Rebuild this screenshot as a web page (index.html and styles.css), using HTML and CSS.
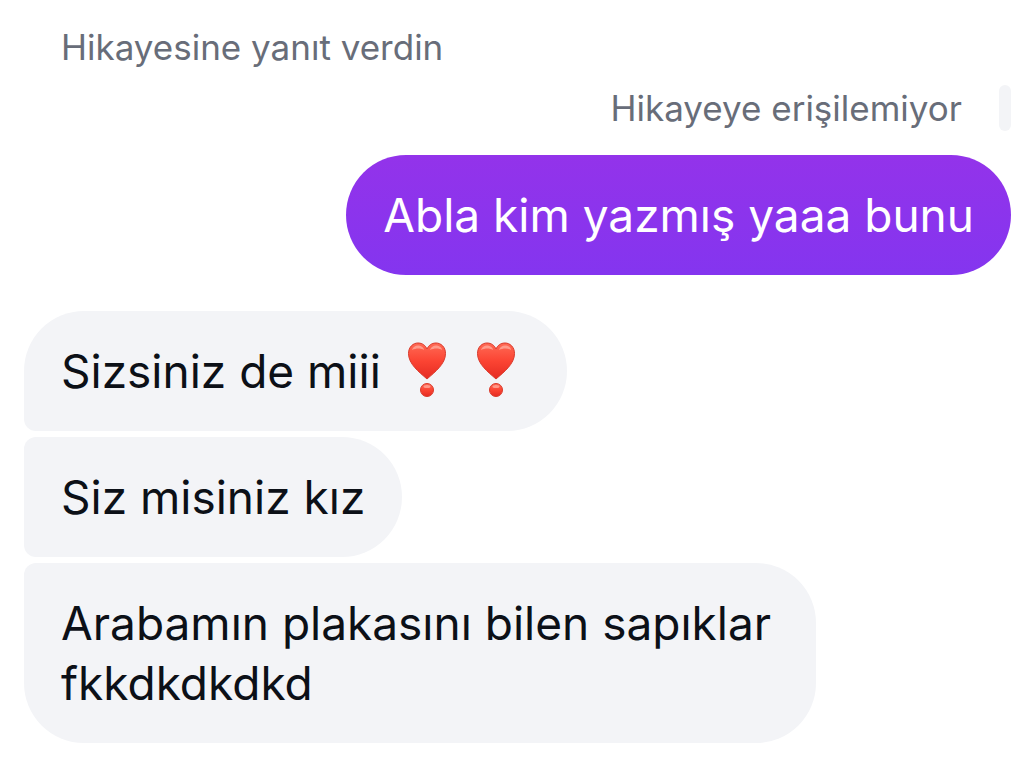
FILE: index.html
```html
<!DOCTYPE html>
<html lang="tr">
<head>
<meta charset="utf-8">
<meta name="viewport" content="width=device-width, initial-scale=1">
<title>Sohbet</title>
<link rel="stylesheet" href="styles.css">
</head>
<body>
<svg class="defs" width="0" height="0" aria-hidden="true">
  <defs>
    <linearGradient id="heartFill" x1="0" y1="0" x2="0" y2="1">
      <stop offset="0" stop-color="#ff6a55"/>
      <stop offset="0.5" stop-color="#fb4433"/>
      <stop offset="1" stop-color="#e52b22"/>
    </linearGradient>
    <symbol id="heart" viewBox="0 0 40 58">
      <path d="M20 38C12 31 1.500 23 1.500 12.500C1.500 6 6 2 11 2C15.500 2 18.500 4.500 20 8C21.500 4.500 24.500 2 29 2C34 2 38.500 6 38.500 12.500C38.500 23 28 31 20 38Z" fill="url(#heartFill)" stroke="#d93a2b" stroke-width="1"/>
      <path d="M5 9C6 5.500 9 4 12 4.500C15 5 17 7 17 9C14 7 9 7 5 9ZM23 9C24 5.500 27 4 30 4.500C33 5 35 7 35 9C32 7 27 7 23 9Z" fill="#ffb3a5" opacity=".7"/>
      <circle cx="20" cy="49" r="6.500" fill="url(#heartFill)" stroke="#d93a2b" stroke-width="1"/>
      <ellipse cx="20" cy="45.500" rx="3.500" ry="1.500" fill="#ffb3a5" opacity=".7"/>
    </symbol>
  </defs>
</svg>
<main class="chat">
  <p class="note">Hikayesine yanıt verdin</p>
  <div class="reply"><p>Hikayeye erişilemiyor</p><span class="bar"></span></div>
  <p class="bubble sent">Abla kim yazmış yaaa bunu</p>
  <section class="received">
    <p class="bubble first">Sizsiniz de miii
      <span class="hearts" role="img" aria-label="kalp ünlem"><svg><use href="#heart"/></svg><svg><use href="#heart"/></svg></span></p>
    <p class="bubble">Siz misiniz kız</p>
    <p class="bubble">Arabamın plakasını bilen sapıklar fkkdkdkdkd</p>
  </section>
</main>
</body>
</html>
```
FILE: styles.css
```css
* { box-sizing: border-box; }
body { margin: 0; background: #fff; font-family: Inter, "Noto Sans", sans-serif; }
p { margin: 0; }
.defs { position: absolute; }
.chat { display: flex; flex-direction: column; padding: 24px 23px 20px 24px; }
.note, .reply { color: #686d79; font-size: 35px; line-height: 46px; }
.note { padding-left: 37px; }
.reply { display: flex; justify-content: flex-end; gap: 37px; margin-top: 15px; }
.bar { width: 12px; height: 46px; border-radius: 6px; background: #f3f4f7; }
.bubble { width: fit-content; max-width: 792px; padding: 30px 37px; border-radius: 12px 60px 60px 12px; background: #f3f4f7; color: #0c1017; font-size: 46px; line-height: 60px; }
.sent { align-self: flex-end; margin-top: 24px; border-radius: 60px; background: linear-gradient(#9333ea, #8435ef); color: #fff; }
.received { display: flex; flex-direction: column; gap: 6px; margin-top: 36px; }
.first { display: flex; border-top-left-radius: 60px; }
.received .bubble:last-child { border-bottom-left-radius: 60px; }
.hearts { display: flex; gap: 29px; padding: 0 14px 0 26px; }
.hearts svg { width: 40px; height: 58px; }
```
